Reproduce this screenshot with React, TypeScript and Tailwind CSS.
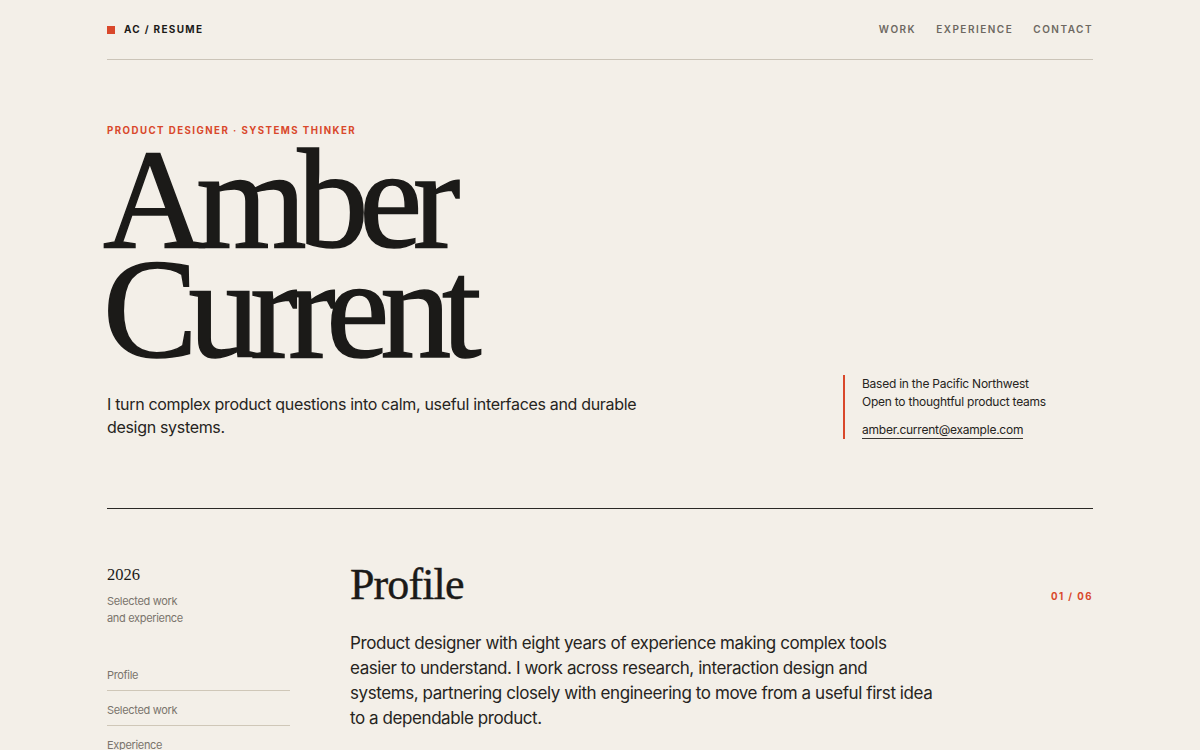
export default function App() {
  const sideNav = ["Profile", "Selected work", "Experience", "Skills", "Education", "Contact"];

  return (
    <div className="min-h-screen bg-[#f3efe8] text-[#1b1a18] font-['Inter',sans-serif]">
      <div className="mx-auto max-w-[986px]">
        {/* Top bar */}
        <header className="flex h-[60px] items-center justify-between border-b border-[#cbc4b8]">
          <div className="flex items-center gap-[9px]">
            <span className="block h-2 w-2 bg-[#d9482b]" />
            <span className="text-[10px] font-bold tracking-[0.13em] text-[#1b1a18]">AC / RESUME</span>
          </div>
          <nav className="flex items-center gap-[20px] text-[10px] font-semibold tracking-[0.15em] text-[#6d6861]">
            <a>WORK</a>
            <a>EXPERIENCE</a>
            <a>CONTACT</a>
          </nav>
        </header>

        {/* Hero */}
        <section className="border-b border-[#2a2825] pt-[64px] pb-[69px]">
          <p className="text-[9.7px] font-bold leading-[14px] tracking-[0.15em] text-[#d9482b]">
            PRODUCT DESIGNER · SYSTEMS THINKER
          </p>
          <h1 className="mt-[6px] -ml-[4px] font-['Liberation_Serif',serif] text-[142px] font-normal leading-[110px] tracking-[-0.065em] text-[#1b1a18] [-webkit-text-stroke:1.5px_#1b1a18]">
            Amber
            <br />
            Current
          </h1>
          <div className="mt-[11px] flex items-end justify-between">
            <p className="max-w-[560px] text-[16px] leading-[23px] tracking-[-0.02em] text-[#262421]">
              I turn complex product questions into calm, useful interfaces and durable design systems.
            </p>
            <div className="w-[250px] border-l-2 border-[#d9482b] pl-[17px] text-[12px] leading-[18px] tracking-[-0.02em] text-[#262421]">
              <p>Based in the Pacific Northwest</p>
              <p>Open to thoughtful product teams</p>
              <a className="mt-[10px] block w-fit border-b border-[#3a3733] leading-[17px]">amber.current@example.com</a>
            </div>
          </div>
        </section>

        {/* Profile */}
        <section className="grid grid-cols-[183px_1fr] gap-[60px] pt-[56px]">
          <aside className="tracking-[-0.02em]">
            <p className="font-['Liberation_Serif',serif] text-[16.5px] leading-[20px] tracking-normal text-[#1b1a18]">2026</p>
            <p className="mt-[8px] text-[11px] leading-[17px] text-[#7a746c]">
              Selected work
              <br />
              and experience
            </p>
            <ul className="mt-[29px] text-[11px] text-[#7a746c]">
              {sideNav.map((item) => (
                <li key={item} className="border-b border-[#cfc7b8] pt-[11px] pb-[6px] leading-[17px]">
                  {item}
                </li>
              ))}
            </ul>
          </aside>
          <div>
            <div className="-mt-[4px] flex items-start justify-between">
              <h2 className="font-['Liberation_Serif',serif] text-[44px] leading-[48px] tracking-[-0.02em] text-[#1b1a18] [-webkit-text-stroke:0.4px_#1b1a18]">
                Profile
              </h2>
              <span className="mt-[29px] text-[9.7px] font-bold tracking-[0.15em] text-[#d9482b]">01 / 06</span>
            </div>
            <p className="mt-[22px] max-w-[585px] text-[17px] leading-[25px] tracking-[-0.025em] text-[#262421]">
              Product designer with eight years of experience making complex tools easier to understand. I work across
              research, interaction design and systems, partnering closely with engineering to move from a useful first
              idea to a dependable product.
            </p>
          </div>
        </section>
      </div>
    </div>
  );
}
